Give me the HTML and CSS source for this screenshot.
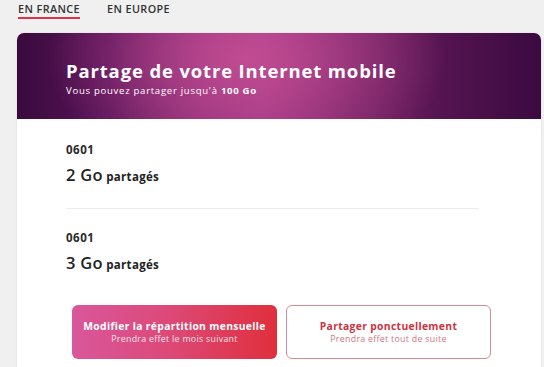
FILE: index.html
```html
<!DOCTYPE html>
<html lang="fr">
<head>
<meta charset="utf-8">
<link rel="stylesheet" href="styles.css">
</head>
<body>
<nav class="tabs">
  <span class="tab active">EN FRANCE</span>
  <span class="tab">EN EUROPE</span>
</nav>
<section class="card">
  <header class="card-head">
    <h1>Partage de votre Internet mobile</h1>
    <p>Vous pouvez partager jusqu'à <b>100 Go</b></p>
  </header>
  <div class="card-body">
    <div class="line">
      <div class="num">0601</div>
      <div class="amount"><span class="big">2 Go</span> partagés</div>
    </div>
    <hr class="sep">
    <div class="line">
      <div class="num">0601</div>
      <div class="amount"><span class="big">3 Go</span> partagés</div>
    </div>
    <div class="actions">
      <button class="btn primary"><strong>Modifier la répartition mensuelle</strong><span>Prendra effet le mois suivant</span></button>
      <button class="btn outline"><strong>Partager ponctuellement</strong><span>Prendra effet tout de suite</span></button>
    </div>
  </div>
</section>
</body>
</html>
```
FILE: styles.css
```css
html, body {
  margin: 0;
  padding: 0;
}
body {
  background: #f0f0f0;
  font-family: "Open Sans", "DejaVu Sans", sans-serif;
  color: #2a2a2a;
  width: 544px;
  height: 367px;
  overflow: hidden;
}
.tabs {
  display: flex;
  gap: 27px;
  padding: 2px 0 0 18px;
  height: 30px;
  box-sizing: border-box;
}
.tab {
  font-size: 10.8px;
  font-weight: 600;
  color: #333;
  height: 15px;
  line-height: 13px;
  letter-spacing: 0.4px;
}
.tab.active {
  border-bottom: 2px solid #e0304a;
}
.card {
  margin: 3px 0 0 17px;
  width: 524px;
  background: #fff;
  border-radius: 7px 7px 0 0;
  overflow: hidden;
  box-shadow: 0 0 2px rgba(0,0,0,0.12);
}
.card-head {
  height: 86px;
  box-sizing: border-box;
  padding: 26px 0 0 49px;
  color: #fff;
  background:
    radial-gradient(ellipse 200px 125px at 230px 25px, rgba(200,80,150,0.85), rgba(200,80,150,0) 100%),
    linear-gradient(90deg, #3a0a3d 0%, #5a145a 18%, #8a2c74 35%, #9a3580 47%, #7a2469 62%, #531350 82%, #3b0a40 100%);
}
.card-head h1 {
  margin: 0;
  font-size: 18.5px;
  font-weight: 700;
  line-height: 23px;
  letter-spacing: 0.85px;
}
.card-head p {
  margin: 3px 0 0;
  font-size: 9.6px;
  line-height: 12px;
  letter-spacing: 0.7px;
}
.card-body {
  padding: 24px 0 20px 49px;
}
.num {
  font-size: 11.5px;
  font-weight: 700;
  line-height: 14px;
  color: #2a2a2a;
  letter-spacing: 0.5px;
}
.amount {
  margin-top: 8px;
  font-size: 11.5px;
  font-weight: 700;
  line-height: 20px;
  color: #222;
  letter-spacing: 0.3px;
}
.amount .big {
  font-size: 16.5px;
  font-weight: 600;
  letter-spacing: 0.3px;
}
.sep {
  border: 0;
  border-top: 1px solid #ececec;
  margin: 21px 0 22px;
  width: 413px;
}
.actions {
  display: flex;
  gap: 9px;
  margin: 30px 0 0 6px;
}
.btn {
  width: 205px;
  height: 54px;
  border-radius: 6px;
  font-family: inherit;
  display: flex;
  flex-direction: column;
  align-items: center;
  justify-content: center;
  gap: 1px;
  padding: 0;
  cursor: pointer;
}
.btn strong {
  font-size: 10.3px;
  font-weight: 700;
  line-height: 13px;
  letter-spacing: 0.35px;
}
.btn span {
  font-size: 8.8px;
  line-height: 11px;
  letter-spacing: 0.3px;
}
.btn.primary {
  border: 0;
  color: #fff;
  background: linear-gradient(90deg, #d9579b 0%, #dc4a7a 45%, #df2f3c 100%);
}
.btn.primary span {
  color: #fbe0ea;
}
.btn.outline {
  background: #fff;
  border: 1.5px solid #d88a92;
  color: #c9343e;
}
.btn.outline span {
  color: #d07782;
}
```
